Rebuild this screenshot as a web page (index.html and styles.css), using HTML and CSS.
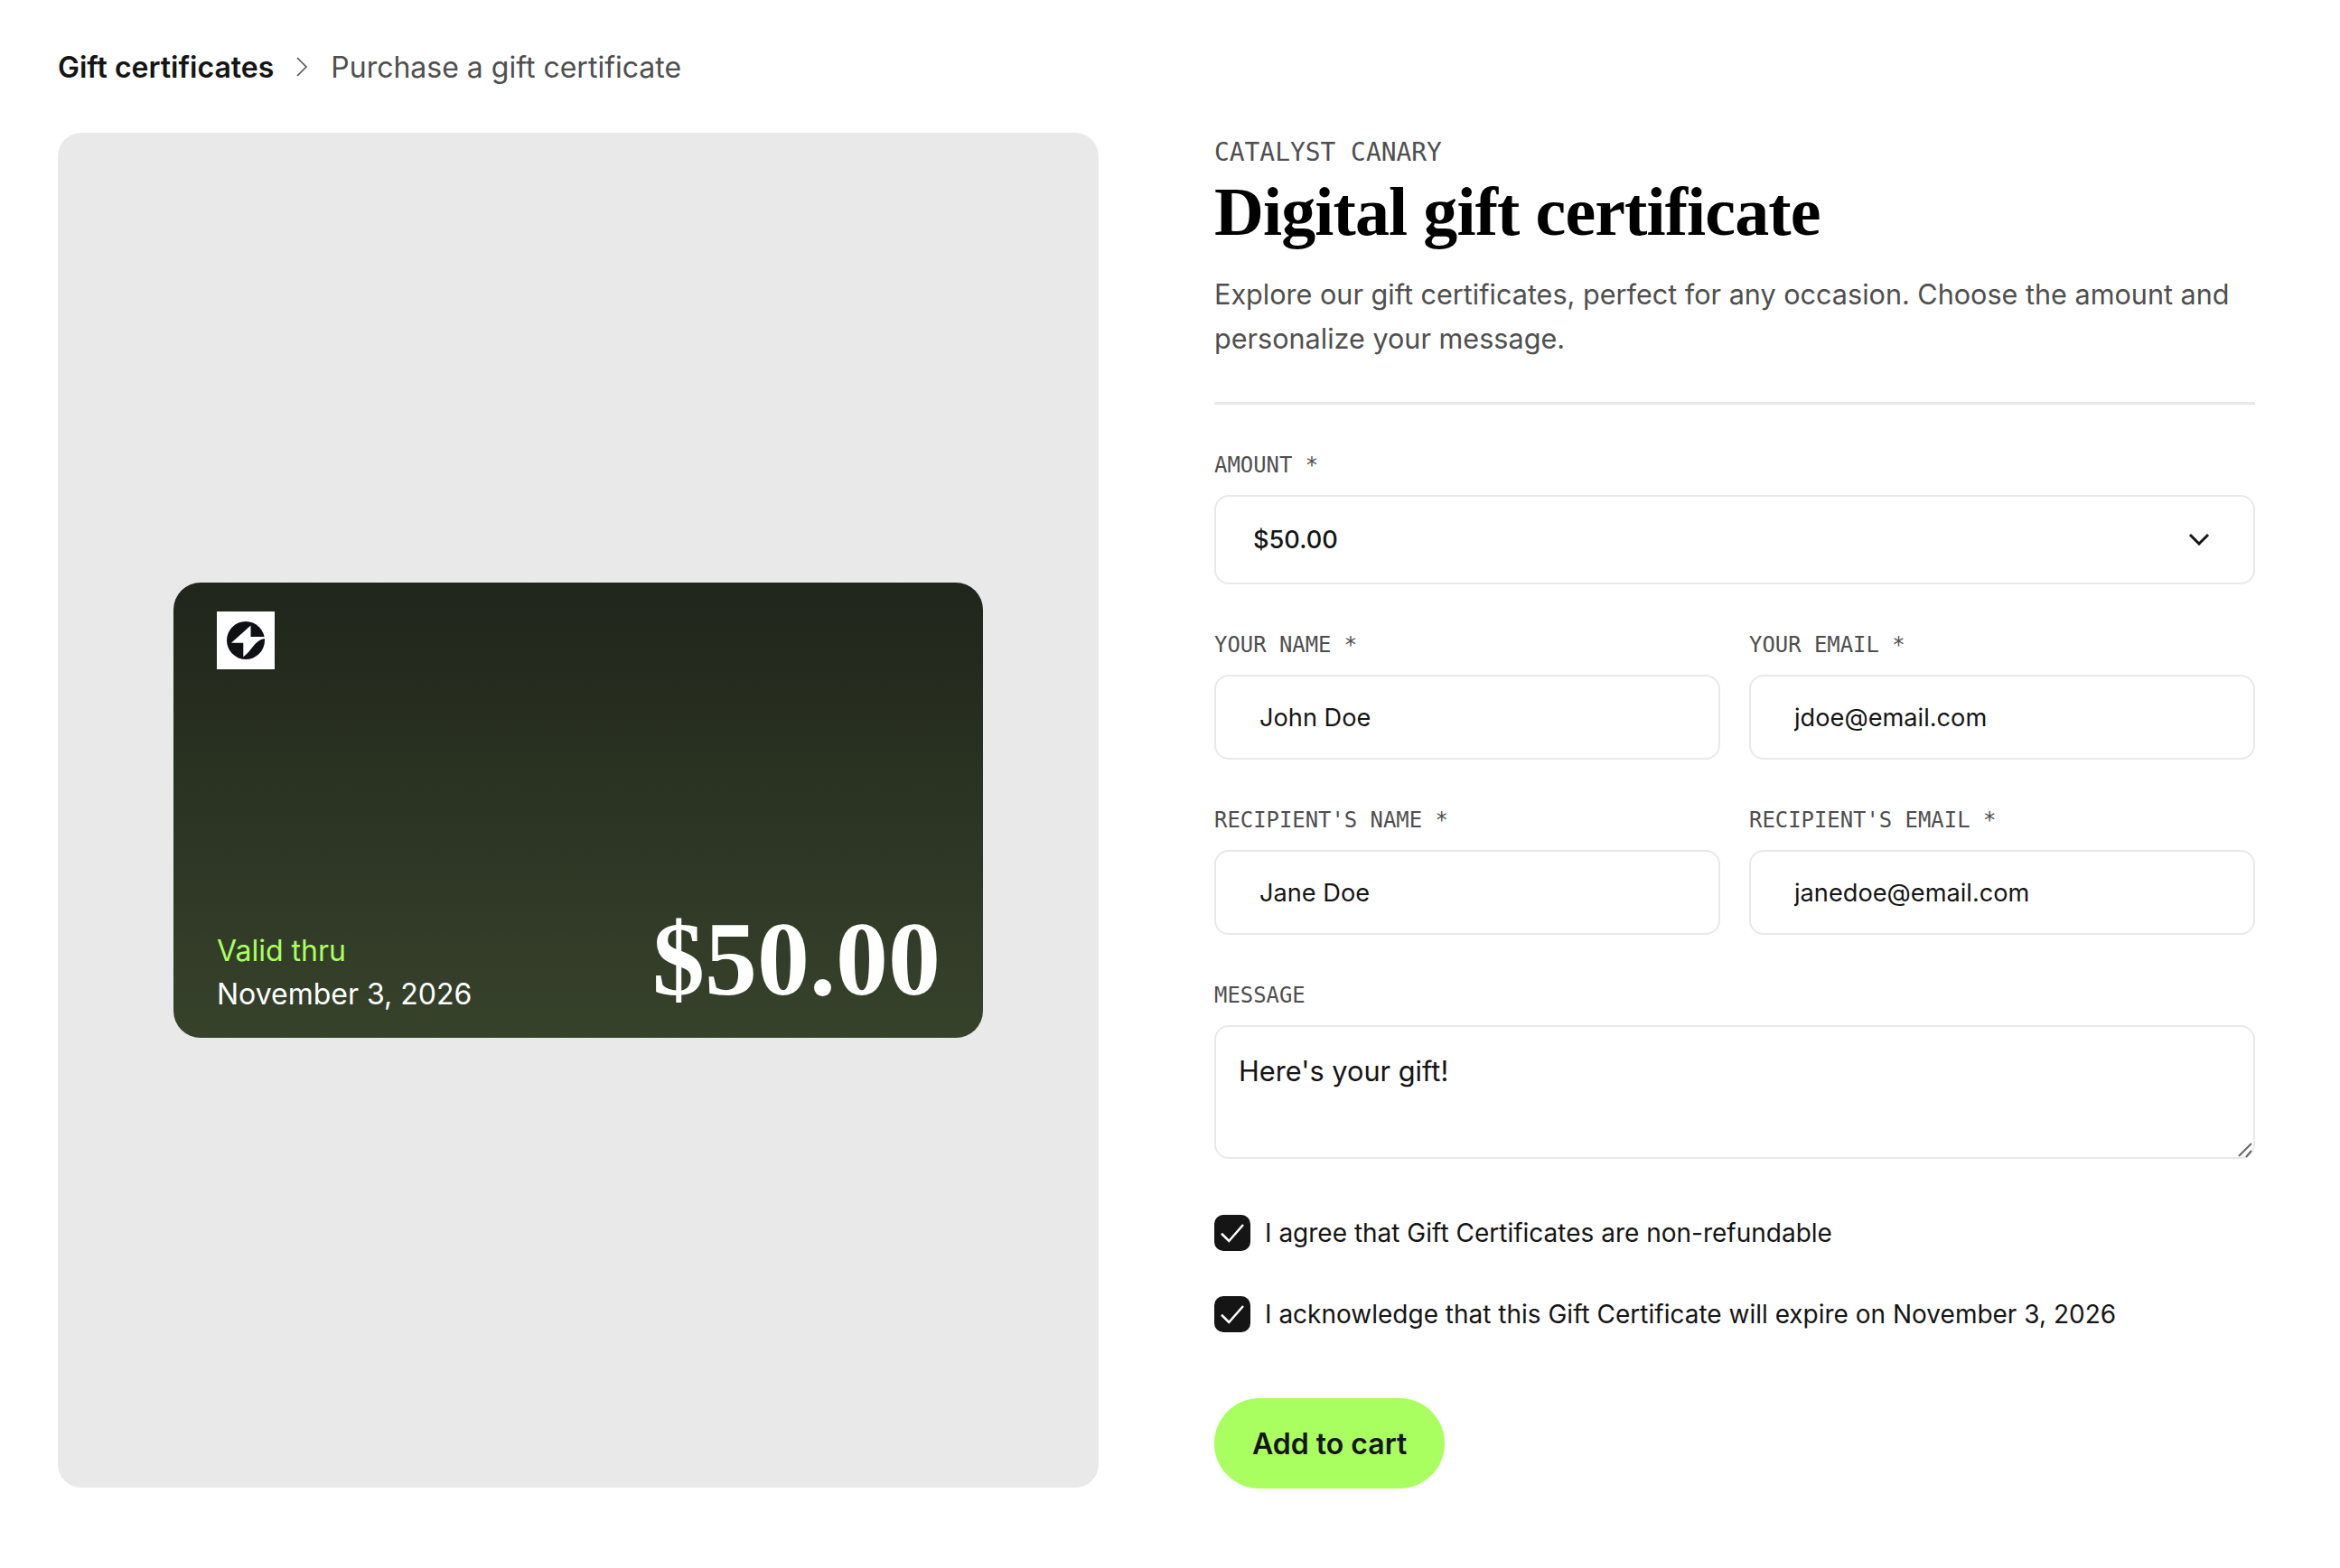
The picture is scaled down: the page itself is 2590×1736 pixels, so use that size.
FILE: index.html
```html
<!DOCTYPE html>
<html>
<head>
    <link rel="stylesheet" href="styles.css">
</head>
<body>
    <nav class="crumbs">
        <a href="#" class="crumb-link">Gift certificates</a>
        <svg class="crumb-sep" viewBox="0 0 14 24"><path d="M2 2l10 10L2 22"/></svg>
        <span class="crumb-here">Purchase a gift certificate</span>
    </nav>

    <main class="layout">
        <section class="preview">
            <div class="card">
                <svg class="card-logo" viewBox="0 0 64 64">
                    <rect width="64" height="64" fill="#fff"/>
                    <circle cx="32" cy="32" r="21" fill="#0f1014"/>
                    <path d="M37.5 15.5L16 34.7h13.3v15.5c6-4 9-10 14-15.2 3-3 7-5 12-5.5V28H37.5z" fill="#fff"/>
                </svg>
                <div class="card-foot">
                    <div class="card-valid">
                        <div class="valid-label">Valid thru</div>
                        <div class="valid-date">November 3, 2026</div>
                    </div>
                    <div class="card-amount">$50.00</div>
                </div>
            </div>
        </section>

        <section class="details">
            <div class="eyebrow">CATALYST CANARY</div>
            <h1 class="title">Digital gift certificate</h1>
            <p class="intro">Explore our gift certificates, perfect for any occasion. Choose the amount and personalize your message.</p>

            <form class="gift-form">
                <div class="field">
                    <label class="lbl">AMOUNT *</label>
                    <div class="select-wrap">
                        <select class="select">
                            <option>$50.00</option>
                        </select>
                        <svg class="chevron" viewBox="0 0 24 14"><path d="M2 2l10 10L22 2"/></svg>
                    </div>
                </div>
                <div class="two-col">
                    <div class="field">
                        <label class="lbl">YOUR NAME *</label>
                        <input class="txt" type="text" value="John Doe">
                    </div>
                    <div class="field">
                        <label class="lbl">YOUR EMAIL *</label>
                        <input class="txt" type="text" value="jdoe@email.com">
                    </div>
                </div>
                <div class="two-col">
                    <div class="field">
                        <label class="lbl">RECIPIENT'S NAME *</label>
                        <input class="txt" type="text" value="Jane Doe">
                    </div>
                    <div class="field">
                        <label class="lbl">RECIPIENT'S EMAIL *</label>
                        <input class="txt" type="text" value="janedoe@email.com">
                    </div>
                </div>
                <div class="field">
                    <label class="lbl">MESSAGE</label>
                    <div class="area-wrap">
                        <textarea class="area">Here's your gift!</textarea>
                        <svg class="grip" viewBox="0 0 20 20"><path d="M4 17L18 3M12 18l6-7"/></svg>
                    </div>
                </div>
                <div class="checks">
                    <div class="check">
                        <span class="box"><svg viewBox="0 0 24 24"><path d="M4 12.5l5.5 5.5L20 6"/></svg></span>
                        <span class="check-text">I agree that Gift Certificates are non-refundable</span>
                    </div>
                    <div class="check">
                        <span class="box"><svg viewBox="0 0 24 24"><path d="M4 12.5l5.5 5.5L20 6"/></svg></span>
                        <span class="check-text">I acknowledge that this Gift Certificate will expire on November 3, 2026</span>
                    </div>
                </div>
                <button class="add-btn" type="button">Add to cart</button>
            </form>
        </section>
    </main>
</body>
</html>
```

FILE: styles.css
```css
* {
    box-sizing: border-box;
}
body {
    margin: 0;
    width: 2590px;
    height: 1736px;
    padding: 51px 94px 0 64px;
    background-color: #fff;
    color: #151515;
    font-family: Inter, "Noto Sans", sans-serif;
    overflow: hidden;
}
.crumbs {
    display: flex;
    align-items: center;
    height: 46px;
    font-size: 32px;
}
.crumb-link {
    font-weight: 600;
    color: #151515;
    text-decoration: none;
}
.crumb-sep {
    width: 14px;
    height: 24px;
    margin: 0 25px 0 24px;
    fill: none;
    stroke: #555;
    stroke-width: 1.6;
}
.crumb-here {
    color: #4f4f4f;
}
.layout {
    display: grid;
    grid-template-columns: 1152px 1152px;
    column-gap: 128px;
    margin-top: 50px;
}
.preview {
    display: flex;
    align-items: center;
    justify-content: center;
    height: 1500px;
    background-color: #e9e9e9;
    border-radius: 26px;
}
.card {
    display: flex;
    flex-direction: column;
    justify-content: space-between;
    width: 896px;
    height: 504px;
    padding: 32px 48px 24px;
    border-radius: 30px;
    background: linear-gradient(180deg, #20261b 0%, #37422b 100%);
    color: #fff;
}
.card-logo {
    display: block;
    width: 64px;
    height: 64px;
}
.card-foot {
    display: flex;
    align-items: flex-end;
    justify-content: space-between;
}
.valid-label {
    color: #a9ff5f;
    font-size: 32px;
    line-height: 48px;
}
.valid-date {
    font-size: 32px;
    line-height: 48px;
}
.card-amount {
    margin-right: -1px;
    padding-bottom: 5px;
    font-family: "Liberation Serif", serif;
    font-weight: 700;
    font-size: 116px;
    line-height: 116px;
}
.eyebrow {
    font-family: "DejaVu Sans Mono", monospace;
    font-size: 27.9px;
    line-height: 44px;
    color: #4f4f4f;
}
.title {
    margin: 0 0 24px;
    font-family: "Liberation Serif", serif;
    font-size: 76px;
    font-weight: 700;
    line-height: 86px;
    letter-spacing: -0.9px;
    color: #000;
}
.intro {
    margin: 0;
    padding-bottom: 46px;
    border-bottom: 3px solid #e9e9e9;
    font-size: 30.58px;
    line-height: 49px;
    color: #4f4f4f;
}
.gift-form {
    display: flex;
    flex-direction: column;
    gap: 50px;
    margin-top: 50px;
}
.two-col {
    display: grid;
    grid-template-columns: 1fr 1fr;
    column-gap: 32px;
}
.field {
    display: flex;
    flex-direction: column;
    gap: 16px;
}
.lbl {
    font-family: "DejaVu Sans Mono", monospace;
    font-size: 23.9px;
    line-height: 34px;
    color: #4f4f4f;
}
.select-wrap {
    position: relative;
}
.select {
    display: block;
    width: 100%;
    height: 99px;
    padding: 0 41px;
    appearance: none;
    background: #fff;
    border: 2px solid #e9e9e9;
    border-radius: 16px;
    color: #151515;
    font-family: Inter, sans-serif;
    font-size: 27.2px;
    font-weight: 500;
}
.chevron {
    position: absolute;
    top: 42px;
    right: 50px;
    width: 24px;
    height: 14px;
    fill: none;
    stroke: #151515;
    stroke-width: 3;
}
.txt {
    display: block;
    width: 100%;
    height: 94px;
    padding: 0 48px;
    background: #fff;
    border: 2px solid #e9e9e9;
    border-radius: 16px;
    color: #151515;
    font-family: Inter, sans-serif;
    font-size: 27.2px;
}
.area-wrap {
    position: relative;
}
.area {
    display: block;
    width: 100%;
    height: 148px;
    padding: 26px 25px;
    background: #fff;
    border: 2px solid #e9e9e9;
    border-radius: 16px;
    color: #151515;
    font-family: Inter, sans-serif;
    font-size: 30.72px;
    line-height: 46px;
    resize: none;
}
.grip {
    position: absolute;
    right: 2px;
    bottom: 0;
    width: 20px;
    height: 20px;
    fill: none;
    stroke: #666;
    stroke-width: 2;
}
.checks {
    display: flex;
    flex-direction: column;
    gap: 50px;
    margin-top: 12px;
}
.check {
    display: flex;
    align-items: center;
    gap: 16px;
    font-size: 28px;
    line-height: 38px;
}
.check-text {
    padding-bottom: 1px;
}
.box {
    display: flex;
    align-items: center;
    justify-content: center;
    width: 40px;
    height: 40px;
    background-color: #151515;
    border-radius: 10px;
}
.box svg {
    width: 36px;
    height: 36px;
    fill: none;
    stroke: #fff;
    stroke-width: 1.7;
}
.add-btn {
    align-self: flex-start;
    height: 100px;
    margin-top: 23px;
    padding: 0 42px;
    background-color: #a9ff5f;
    border: none;
    border-radius: 50px;
    color: #151515;
    font-family: Inter, sans-serif;
    font-size: 32px;
    font-weight: 600;
}
```
